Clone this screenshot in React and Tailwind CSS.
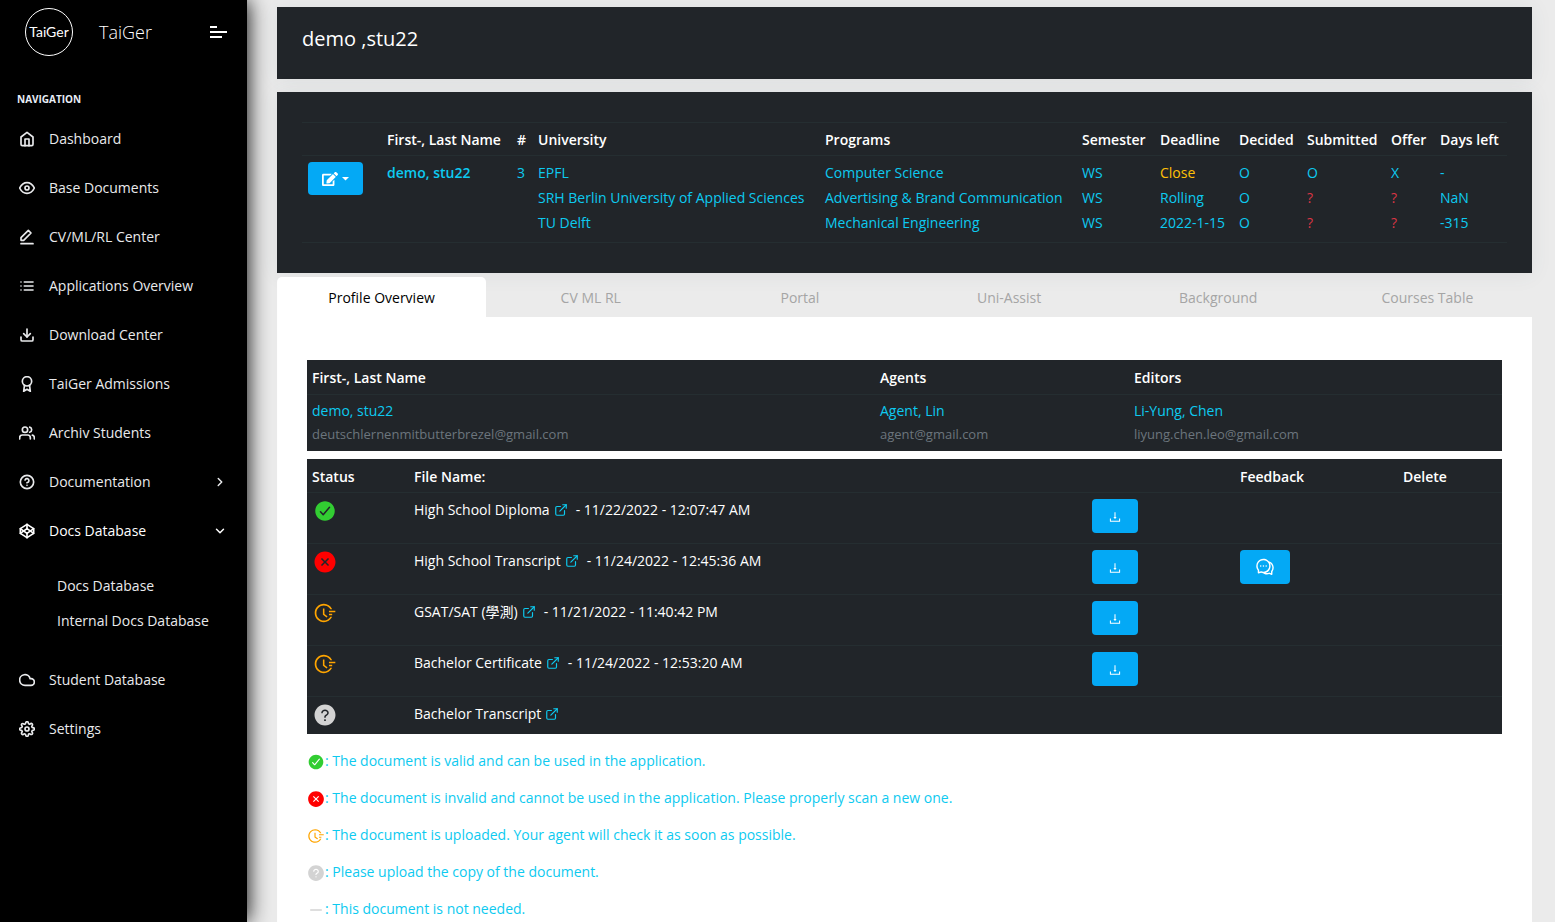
import {
  FiHome, FiEye, FiList, FiDownload, FiAward, FiUsers, FiHelpCircle, FiCodepen,
  FiCloud, FiSettings, FiChevronRight, FiChevronDown, FiExternalLink, FiMinus,
} from "react-icons/fi";
import {
  AiFillCloseCircle, AiOutlineFieldTime, AiFillQuestionCircle, AiOutlineDownload,
  AiOutlineComment,
} from "react-icons/ai";
import { IoCheckmarkCircle } from "react-icons/io5";
import { FaEdit } from "react-icons/fa";

function PenLine({ size = 16, className = "" }) {
  return (
    <svg width={size} height={size} viewBox="0 0 24 24" fill="none" stroke="currentColor" strokeLinecap="round" strokeLinejoin="round" className={className} aria-hidden="true">
      <polygon points="14 2 18 6 7 17 3 17 3 13 14 2" />
      <line x1="3" y1="22" x2="21" y2="22" />
    </svg>
  );
}

const topItems = [
  { label: "Dashboard", Icon: FiHome },
  { label: "Base Documents", Icon: FiEye },
  { label: "CV/ML/RL Center", Icon: PenLine },
  { label: "Applications Overview", Icon: FiList },
  { label: "Download Center", Icon: FiDownload },
  { label: "TaiGer Admissions", Icon: FiAward },
  { label: "Archiv Students", Icon: FiUsers },
  { label: "Documentation", Icon: FiHelpCircle, Caret: FiChevronRight },
  { label: "Docs Database", Icon: FiCodepen, Caret: FiChevronDown, open: true },
];

const bottomItems = [
  { label: "Student Database", Icon: FiCloud },
  { label: "Settings", Icon: FiSettings },
];

function NavItem({ label, Icon, Caret, open }) {
  return (
    <li>
      <a href="#" className={`flex h-[49px] items-center pr-5 pl-[19px] ${open ? "text-white" : "text-[#e9eaec]"}`}>
        <Icon size={16} className="stroke-[2.500px]" />
        <span className="ml-[14px] flex-1">{label}</span>
        {Caret && <Caret size={14} className="stroke-[2.500px]" />}
      </a>
    </li>
  );
}

function Sidebar() {
  return (
    <aside className="z-10 w-[247px] shrink-0 bg-black shadow-[1px_0_20px_0_rgba(0,0,0,0.95)]">
      <div className="flex h-16 items-center pr-5 pl-6">
        <svg width="50" height="50" viewBox="0 0 50 50" className="shrink-0" role="img" aria-label="TaiGer logo">
          <circle cx="25" cy="25" r="23.5" fill="none" stroke="#fff" strokeWidth="1" />
          <text x="25" y="30" textAnchor="middle" fill="#fff" fontFamily="Lato, sans-serif" fontWeight="400" fontSize="14">TaiGer</text>
        </svg>
        <a href="#" className="ml-[25px] flex-1 text-lg font-light text-white">TaiGer</a>
        <button aria-label="Toggle menu" className="flex w-[17px] flex-col gap-[3px]">
          <span className="h-[2px] w-[7px] bg-white" />
          <span className="h-[2px] w-[17px] bg-white" />
          <span className="h-[2px] w-[12px] bg-white" />
        </button>
      </div>
      <nav className="pt-[25px]">
        <h2 className="mb-[5px] pl-[17px] text-[10px] leading-5 font-bold text-[#e8edf7]">NAVIGATION</h2>
        <ul>
          {topItems.map((item) => <NavItem key={item.label} {...item} />)}
        </ul>
        <ul className="pt-[13px] pb-[17px] pl-[57px] leading-[35px] text-[#e9eaec]">
          <li><a href="#">Docs Database</a></li>
          <li><a href="#">Internal Docs Database</a></li>
        </ul>
        <ul>
          {bottomItems.map((item) => <NavItem key={item.label} {...item} />)}
        </ul>
      </nav>
    </aside>
  );
}

const applications = [
  ["EPFL", "Computer Science", "WS", "Close", "O", "O", "X", "-"],
  ["SRH Berlin University of Applied Sciences", "Advertising & Brand Communication", "WS", "Rolling", "O", "?", "?", "NaN"],
  ["TU Delft", "Mechanical Engineering", "WS", "2022-1-15", "O", "?", "?", "-315"],
];

function cellColor(value) {
  if (value === "?") return "text-[#dc3545]";
  if (value === "Close") return "text-[#ffc107]";
  return "";
}

function Applications() {
  return (
    <section className="mt-[13px] bg-[#212529] px-[25px] py-[30px] shadow-[0_1px_20px_0_rgba(69,90,100,0.08)]">
      <table className="w-full table-fixed border-y border-[#252e31] text-left whitespace-nowrap text-[#0dcaf0]">
        <colgroup>
          <col className="w-[80px]" />
          <col className="w-[130px]" />
          <col className="w-[21px]" />
          <col className="w-[287px]" />
          <col className="w-[257px]" />
          <col className="w-[78px]" />
          <col className="w-[79px]" />
          <col className="w-[68px]" />
          <col className="w-[84px]" />
          <col className="w-[49px]" />
          <col className="w-[72px]" />
        </colgroup>
        <thead>
          <tr className="h-[33px] border-b border-[#252e31] text-white">
            <td />
            {["First-, Last Name", "#", "University", "Programs", "Semester", "Deadline", "Decided", "Submitted", "Offer", "Days left"].map((h) => (
              <th key={h} scope="col" className="pt-[2px] pl-[5px] font-semibold">{h}</th>
            ))}
          </tr>
        </thead>
        <tbody className="leading-[25px]">
          {applications.map((row, i) => (
            <tr key={row[0]} className={i === 0 ? "*:pt-1" : i === 2 ? "*:pb-[7px]" : ""}>
              {i === 0 && (
                <>
                  <td rowSpan={3} className="pl-[6px] align-top">
                    <button aria-label="Edit" className="mt-[2px] flex h-[33px] w-[55px] items-center justify-center gap-1 rounded-[4px] bg-[#04a9f5] text-white">
                      <FaEdit size={16} />
                      <svg width="7" height="4" viewBox="0 0 7 4" aria-hidden="true"><path d="M0 0h7L3.500 3.500z" fill="currentColor" /></svg>
                    </button>
                  </td>
                  <td rowSpan={3} className="pl-[5px] align-top font-semibold"><a href="#">demo, stu22</a></td>
                  <td rowSpan={3} className="pl-[5px] align-top">3</td>
                </>
              )}
              {row.map((value, j) => (
                <td key={j} className={`pl-[5px] ${cellColor(value)}`}>
                  {j < 2 ? <a href="#">{value}</a> : value}
                </td>
              ))}
            </tr>
          ))}
        </tbody>
      </table>
    </section>
  );
}

const tabs = ["Profile Overview", "CV ML RL", "Portal", "Uni-Assist", "Background", "Courses Table"];

function Tabs() {
  return (
    <div role="tablist" className="mt-1 grid grid-cols-6">
      {tabs.map((tab, i) => (
        <button
          key={tab}
          role="tab"
          aria-selected={i === 0}
          className={i === 0 ? "h-10 rounded-t-[5px] bg-white pt-[2px] text-black" : "h-10 pt-[2px] text-[#a5a5a5]"}
        >
          {tab}
        </button>
      ))}
    </div>
  );
}

const people = [
  ["demo, stu22", "deutschlernenmitbutterbrezel@gmail.com"],
  ["Agent, Lin", "agent@gmail.com"],
  ["Li-Yung, Chen", "liyung.chen.leo@gmail.com"],
];

function People() {
  return (
    <table className="w-full table-fixed bg-[#212529] text-left">
      <colgroup>
        <col className="w-[568px]" />
        <col className="w-[254px]" />
        <col className="w-[373px]" />
      </colgroup>
      <thead>
        <tr className="h-[34px] border-b border-[#252e31] text-white">
          {["First-, Last Name", "Agents", "Editors"].map((h) => (
            <th key={h} scope="col" className="pt-[2px] pl-[5px] font-semibold">{h}</th>
          ))}
        </tr>
      </thead>
      <tbody>
        <tr>
          {people.map(([name, mail]) => (
            <td key={name} className="pt-1 pb-[5px] pl-[5px] leading-6">
              <a href="#" className="block text-[#0dcaf0]">{name}</a>
              <span className="block text-[13px] leading-[23px] text-[#6c757d]">{mail}</span>
            </td>
          ))}
        </tr>
      </tbody>
    </table>
  );
}

const statusIcons = {
  valid: { Icon: IoCheckmarkCircle, color: "text-[#32cd32]", label: "Valid" },
  invalid: { Icon: AiFillCloseCircle, color: "text-[#ff0000]", label: "Invalid" },
  uploaded: { Icon: AiOutlineFieldTime, color: "text-[#ffa500]", label: "Uploaded" },
  missing: { Icon: AiFillQuestionCircle, color: "text-[#d3d3d3]", label: "Missing" },
  unneeded: { Icon: FiMinus, color: "text-[#d3d3d3]", label: "Not needed" },
};

function Status({ kind, size }) {
  const { Icon, color, label } = statusIcons[kind];
  return <Icon size={size} className={`shrink-0 ${color}`} aria-label={label} />;
}

const files = [
  { status: "valid", name: "High School Diploma", date: "11/22/2022 - 12:07:47 AM" },
  { status: "invalid", name: "High School Transcript", date: "11/24/2022 - 12:45:36 AM", feedback: true },
  { status: "uploaded", name: "GSAT/SAT (學測)", date: "11/21/2022 - 11:40:42 PM" },
  { status: "uploaded", name: "Bachelor Certificate", date: "11/24/2022 - 12:53:20 AM" },
  { status: "missing", name: "Bachelor Transcript" },
];

function Files() {
  return (
    <table className="mt-2 w-full table-fixed bg-[#212529] text-left text-white">
      <colgroup>
        <col className="w-[102px]" />
        <col className="w-[678px]" />
        <col className="w-[148px]" />
        <col className="w-[163px]" />
        <col className="w-[104px]" />
      </colgroup>
      <thead>
        <tr className="h-[34px] border-b border-[#252e31] *:pt-[3px]">
          <th scope="col" className="pl-[5px] font-semibold">Status</th>
          <th scope="col" className="pl-[5px] font-semibold">File Name:</th>
          <td />
          <th scope="col" className="pl-[5px] font-semibold">Feedback</th>
          <th scope="col" className="pl-[5px] font-semibold">Delete</th>
        </tr>
      </thead>
      <tbody>
        {files.map((file) => (
          <tr key={file.name} className={file.date ? "h-[51px] border-b border-[#252e31] align-top" : "h-[37px] align-top"}>
            <td className="pt-[6px] pl-[6px]"><Status kind={file.status} size={24} /></td>
            <td className="pt-[7px] pl-[5px]">
              <span className="flex items-center leading-5">
                {file.name}
                <a href="#" aria-label={`Open ${file.name}`} className="mx-1 text-[#0dcaf0]"><FiExternalLink size={14} /></a>
                {file.date && <span className="ml-1">- {file.date}</span>}
              </span>
            </td>
            <td className="pt-[6px] pl-[5px]">
              {file.date && (
                <button aria-label={`Download ${file.name}`} className="flex h-[34px] w-[46px] items-center justify-center rounded-[4px] bg-[#04a9f5] pt-[2px]">
                  <AiOutlineDownload size={14} />
                </button>
              )}
            </td>
            <td className="pt-[6px] pl-[5px]">
              {file.feedback && (
                <button aria-label="Feedback" className="flex h-[34px] w-[50px] items-center justify-center rounded-[4px] bg-[#04a9f5]">
                  <AiOutlineComment size={20} />
                </button>
              )}
            </td>
            <td />
          </tr>
        ))}
      </tbody>
    </table>
  );
}

const legend = [
  ["valid", "The document is valid and can be used in the application."],
  ["invalid", "The document is invalid and cannot be used in the application. Please properly scan a new one."],
  ["uploaded", "The document is uploaded. Your agent will check it as soon as possible."],
  ["missing", "Please upload the copy of the document."],
  ["unneeded", "This document is not needed."],
];

function Legend() {
  return (
    <ul className="mt-[17px] flex flex-col gap-[17px] text-[#0dcaf0]">
      {legend.map(([kind, text]) => (
        <li key={kind} className="flex h-5 items-end leading-5">
          <Status kind={kind} size={18} />
          <span>: {text}</span>
        </li>
      ))}
    </ul>
  );
}

export default function App() {
  return (
    <div className="flex min-h-screen bg-[#ebebeb] font-['Open_Sans','Noto_Sans_CJK_TC',sans-serif] text-sm">
      <Sidebar />
      <main className="flex min-w-0 flex-1 flex-col pt-[7px] pr-[23px] pl-[30px]">
        <header className="bg-[#212529] px-[25px] pt-4 pb-6 shadow-[0_1px_20px_0_rgba(69,90,100,0.08)]">
          <h1 className="text-xl leading-8 text-white">demo ,stu22</h1>
        </header>
        <Applications />
        <Tabs />
        <section className="flex-1 bg-white px-[30px] pt-[43px]">
          <People />
          <Files />
          <Legend />
        </section>
      </main>
    </div>
  );
}
